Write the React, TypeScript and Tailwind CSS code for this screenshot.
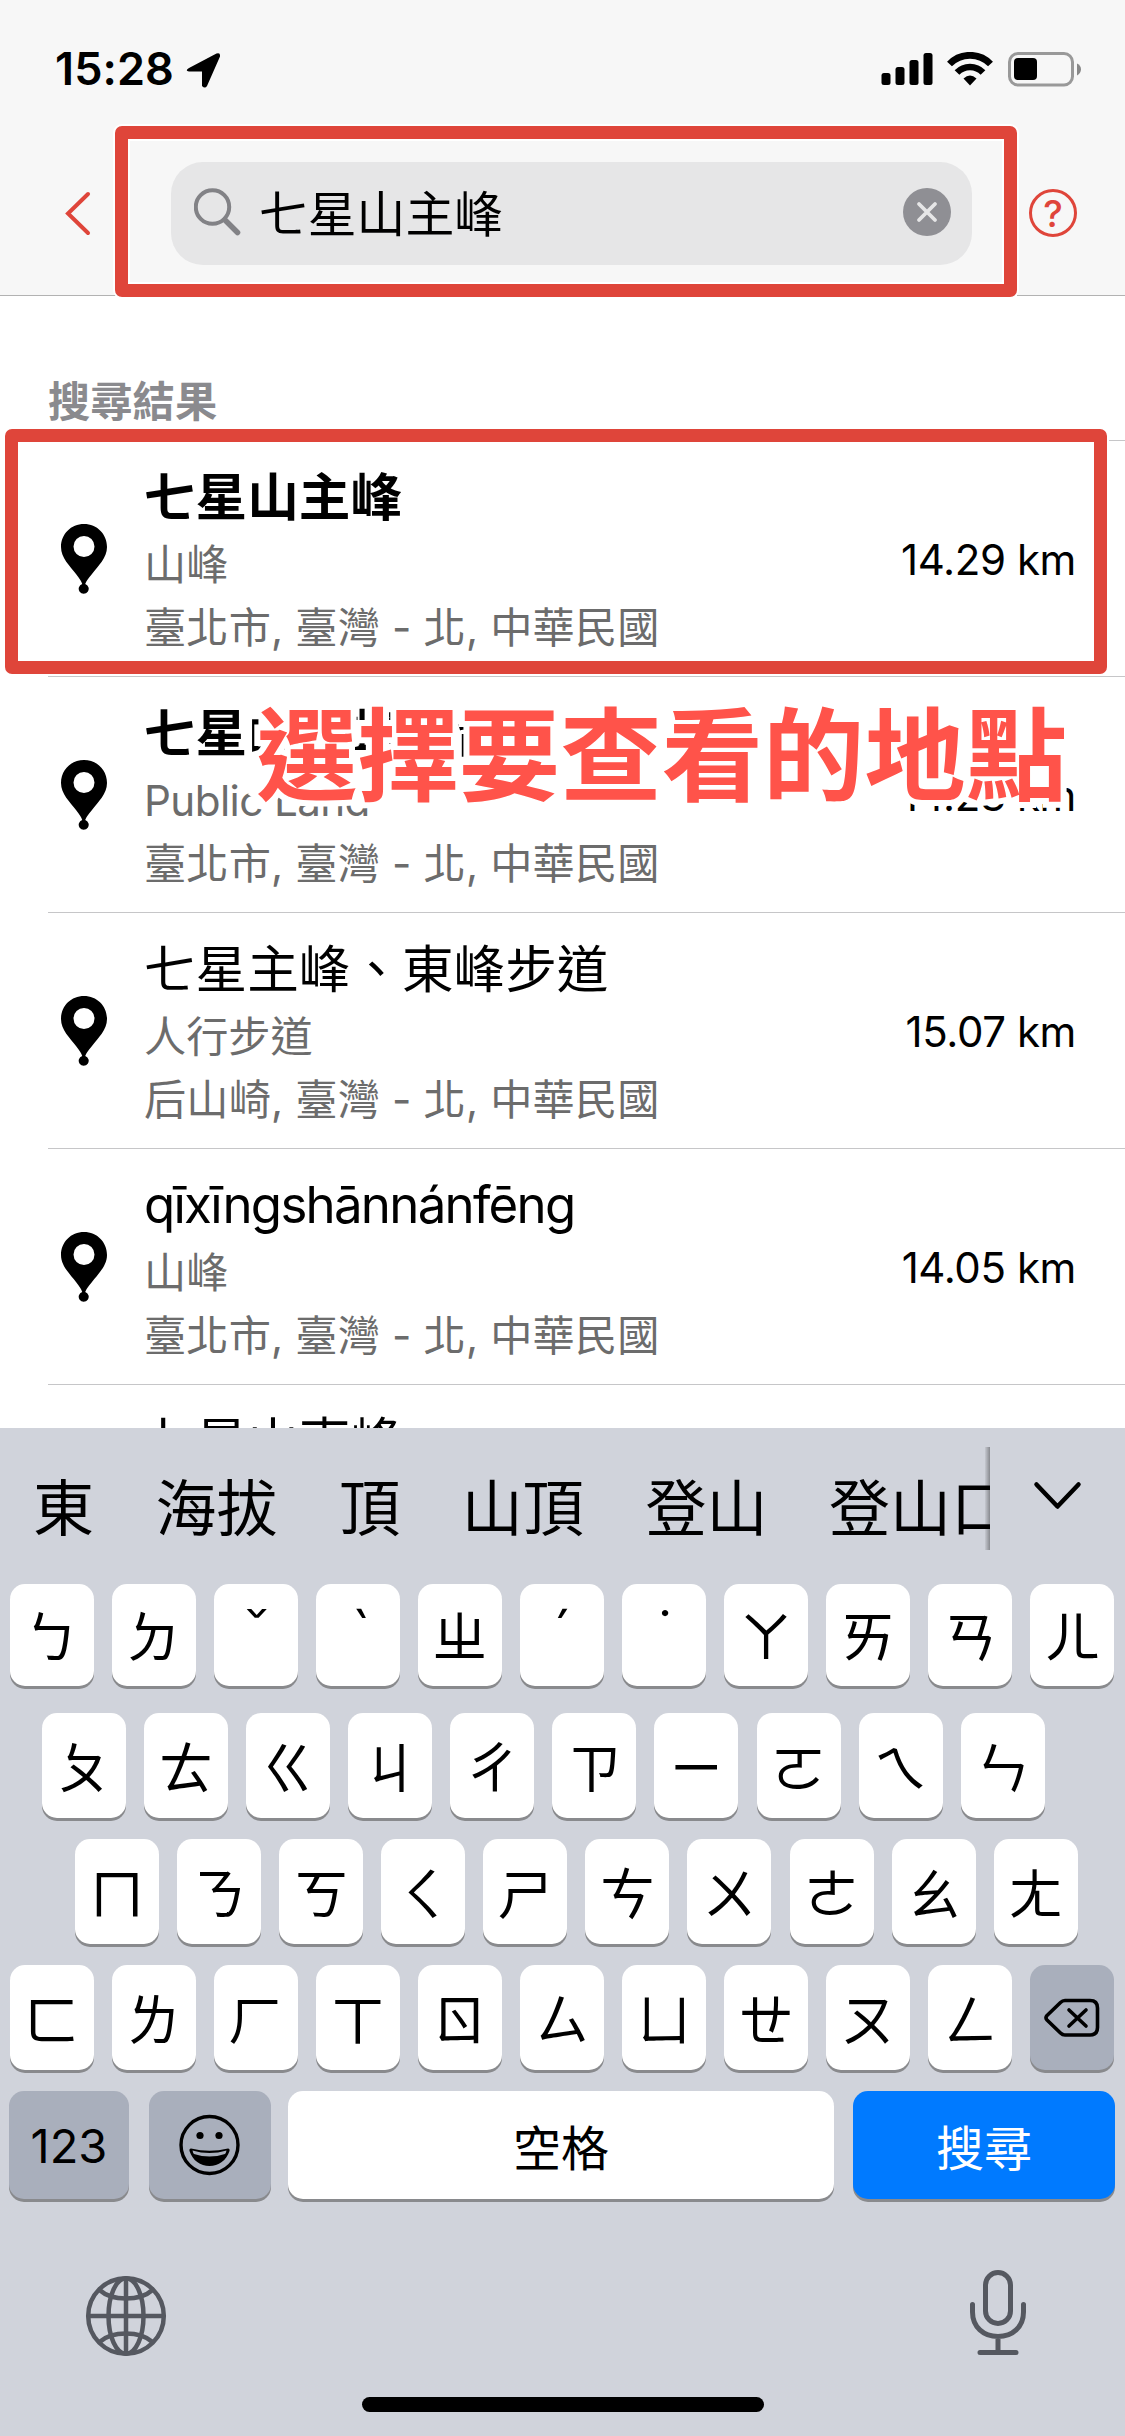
import { type ReactNode } from 'react';
import clsx from 'clsx';

interface Place {
  name: string;
  kind?: string;
  region?: string;
  distance?: string;
  strong?: boolean;
  latin?: boolean;
}

const PLACES: Place[] = [
  { name: '七星山主峰', kind: '山峰', region: '臺北市, 臺灣 - 北, 中華民國', distance: '14.29 km', strong: true },
  { name: '七星山主峰平台', kind: 'Public Land', region: '臺北市, 臺灣 - 北, 中華民國', distance: '14.23 km', strong: true },
  { name: '七星主峰、東峰步道', kind: '人行步道', region: '后山崎, 臺灣 - 北, 中華民國', distance: '15.07 km' },
  { name: 'qīxīngshānnánfēng', kind: '山峰', region: '臺北市, 臺灣 - 北, 中華民國', distance: '14.05 km', latin: true },
  { name: '七星山東峰' },
];

const CANDIDATES = ['東', '海拔', '頂', '山頂', '登山', '登山口'];

const TONES = ['ˇ', 'ˋ', 'ˊ', '˙'];

const KEY_ROWS = [
  ['ㄅ', 'ㄉ', 'ˇ', 'ˋ', 'ㄓ', 'ˊ', '˙', 'ㄚ', 'ㄞ', 'ㄢ', 'ㄦ'],
  ['ㄆ', 'ㄊ', 'ㄍ', 'ㄐ', 'ㄔ', 'ㄗ', 'ㄧ', 'ㄛ', 'ㄟ', 'ㄣ'],
  ['ㄇ', 'ㄋ', 'ㄎ', 'ㄑ', 'ㄕ', 'ㄘ', 'ㄨ', 'ㄜ', 'ㄠ', 'ㄤ'],
  ['ㄈ', 'ㄌ', 'ㄏ', 'ㄒ', 'ㄖ', 'ㄙ', 'ㄩ', 'ㄝ', 'ㄡ', 'ㄥ'],
];

export default function App() {
  return (
    <div className="relative flex h-[2436px] w-[1125px] flex-col overflow-hidden bg-white font-['Inter','Noto_Sans_CJK_TC',sans-serif] text-black">
      <header className="h-[296px] shrink-0 border-b border-[#b2b2b2] bg-[#f7f7f7]">
        <StatusBar />
        <SearchBar />
      </header>

      <main className="h-[1132px] shrink-0 overflow-hidden">
        <h2 className="flex h-[144px] items-end pb-[7px] pl-12 text-[42.3px] leading-[62px] font-bold text-[#8a8a8e]">
          搜尋結果
        </h2>
        <ul className="ml-12 border-t border-[#c6c6c8]">
          {PLACES.map((place) => (
            <PlaceRow key={place.name} place={place} />
          ))}
        </ul>
      </main>

      <Keyboard />

      <Highlight className="top-[126px] left-[115px] h-[171px] w-[902px]" />
      <Highlight className="top-[429px] left-[5px] h-[245px] w-[1102px]" />
      <p className="absolute top-[683px] left-[256px] text-[101.4px] leading-[146px] font-bold whitespace-nowrap text-[#ff534a] [-webkit-text-stroke:12px_white] [paint-order:stroke_fill]">
        選擇要查看的地點
      </p>
    </div>
  );
}

function Highlight({ className }: { className: string }) {
  return (
    <div
      className={clsx(
        'pointer-events-none absolute rounded-[7px] border-[13px] border-[#df453a] shadow-[0_0_0_2px_white,inset_0_0_0_2px_white]',
        className,
      )}
    />
  );
}

function StatusBar() {
  return (
    <div className="flex h-[126px] items-start justify-between pt-[52px] pr-[43px] pl-[55px]">
      <div className="flex items-start gap-[12px]">
        <span className="text-[45px] leading-[34px] font-semibold tracking-[0.1px]">15:28</span>
        <svg width="35" height="36" viewBox="0 0 35 36" aria-hidden>
          <path d="M3 16 30.500 1.500Q34.500 0 34 4.500L21 34Q19 37 16 34V19.500H3Q-1.500 18.500 3 16Z" />
        </svg>
      </div>
      <div className="flex items-start">
        <svg width="52" height="34" viewBox="0 0 52 34" aria-hidden>
          <rect x="0.500" y="21" width="9" height="12" rx="2.500" />
          <rect x="14.500" y="15" width="9" height="18" rx="2.500" />
          <rect x="28.500" y="8" width="9" height="25" rx="2.500" />
          <rect x="42.500" y="1" width="9" height="32" rx="2.500" />
        </svg>
        <svg className="ml-3.5" width="46" height="34" viewBox="0 0 46 34" aria-hidden>
          <path d="M2.500 12A28.500 28.500 0 0 1 43.500 12" fill="none" stroke="#000" strokeWidth="6.800" />
          <path d="M10 20.500A18 18 0 0 1 36 20.500" fill="none" stroke="#000" strokeWidth="6.500" />
          <path d="M16.500 26.500Q23 20.500 29.500 26.500L23 33.500Z" />
        </svg>
        <svg className="ml-[15px]" width="74" height="35" viewBox="0 0 74 35" aria-hidden>
          <rect x="1.500" y="1.500" width="63" height="31.500" rx="8.500" fill="none" stroke="#999" strokeWidth="3" />
          <rect x="6" y="6" width="23" height="22" rx="4" />
          <path d="M69 11.500Q73 13.500 73 17.300T69 23.500Z" fill="#888" />
        </svg>
      </div>
    </div>
  );
}

function SearchBar() {
  return (
    <div className="flex items-center pt-9 pl-[63px]">
      <svg width="28" height="46" viewBox="0 0 28 46" fill="none" stroke="#df453a" strokeWidth="4" aria-hidden>
        <path d="M25 3 5 22.500 25 42" strokeLinecap="round" strokeLinejoin="miter" />
      </svg>
      <div className="ml-20 flex h-[103px] w-[801px] items-center rounded-[32px] bg-[#e6e6e7] pr-[21px] pl-[23px]">
        <svg className="mb-1" width="47" height="48" viewBox="0 0 47 48" fill="none" stroke="#828286" aria-hidden>
          <circle cx="18.500" cy="19" r="16.700" strokeWidth="4" />
          <path d="M31 32 43.500 44.500" strokeWidth="5.500" strokeLinecap="round" />
        </svg>
        <span className="mt-0.5 ml-[18px] flex-1 text-[48.800px] leading-[70px]">七星山主峰</span>
        <svg className="mb-[3px]" width="48" height="48" viewBox="0 0 48 48" aria-hidden>
          <circle cx="24" cy="24" r="24" fill="#8f8f94" />
          <path d="M16 16 32 32M32 16 16 32" stroke="#e6e6e7" strokeWidth="3.800" strokeLinecap="round" />
        </svg>
      </div>
      <div className="mb-px ml-[57px] grid h-12 w-12 place-items-center rounded-full border-[3px] border-[#df453a] text-[37px] leading-none font-medium text-[#df453a]">
        ?
      </div>
    </div>
  );
}

function PlaceRow({ place }: { place: Place }) {
  return (
    <li className="flex h-[236px] items-start border-b border-[#c6c6c8]">
      <svg className="mt-[83px] ml-[13px]" width="46" height="70" viewBox="0 0 46 70" aria-hidden>
        <path
          fillRule="evenodd"
          d="M23 0C10 0 0 10 0 23C0 34 9 42 15 50Q20.500 57 21.200 60A5 5 0 1 0 24.200 60Q25 57 31 50C37 42 46 34 46 23C46 10 36 0 23 0ZM23 12A10.500 10.500 0 1 1 23 33A10.500 10.500 0 0 1 23 12Z"
        />
      </svg>
      <div className="ml-[37px] flex-1 pt-[18.500px] text-[42.200px] text-[#6c6c6c]">
        <p
          className={clsx(
            'leading-[74px] text-black',
            place.strong && 'font-bold',
            place.latin ? 'text-[51px] tracking-[-1.750px]' : 'text-[51.600px]',
          )}
        >
          {place.name}
        </p>
        {place.kind && (
          <p className={clsx('leading-[62px]', place.kind === 'Public Land' && 'tracking-[-0.600px]')}>{place.kind}</p>
        )}
        {place.region && <p className="leading-[64px] tracking-[0.150px] whitespace-nowrap">{place.region}</p>}
      </div>
      {place.distance && (
        <span className="mt-[88px] mr-[49px] text-[42px] leading-[62px] tracking-[-0.400px]">{place.distance}</span>
      )}
    </li>
  );
}

function Keyboard() {
  return (
    <section className="flex flex-1 flex-col bg-[#d0d3db]">
      <div className="flex h-[156px] items-start">
        <div className="relative mt-[19px] flex h-[103px] w-[990px] items-center gap-[61.600px] overflow-hidden pt-5 pl-[33px] text-[61px] leading-[82px] whitespace-nowrap">
          {CANDIDATES.map((word) => (
            <span key={word} className="shrink-0">
              {word}
            </span>
          ))}
          <div className="absolute inset-y-0 right-0 w-[5px] bg-linear-to-r from-black/5 to-black/35" />
        </div>
        <svg
          className="mt-[52px] ml-[42px]"
          width="51"
          height="32"
          viewBox="0 0 51 32"
          fill="none"
          stroke="#000"
          strokeWidth="4.500"
          strokeLinecap="round"
          strokeLinejoin="round"
          aria-hidden
        >
          <path d="M4.500 4.500 25.500 26.500 46.500 4.500" />
        </svg>
      </div>

      <KeyRow className="mb-[27px] h-[102px] pl-[9.500px]" keys={KEY_ROWS[0]} />
      <KeyRow className="mb-[21px] h-[105px] pl-[42px]" keys={KEY_ROWS[1]} />
      <KeyRow className="mb-[21px] h-[105px] pl-[75px]" keys={KEY_ROWS[2]} />
      <KeyRow className="mb-[21px] h-[105px] pl-[9.500px]" keys={KEY_ROWS[3]}>
        <Key className="w-[84px] bg-[#a9afbc]">
          <svg width="56" height="40" viewBox="0 0 56 40" fill="none" stroke="#000" strokeWidth="3.600" aria-hidden>
            <path
              d="M21 2.500H46Q53.500 2.500 53.500 10V29.500Q53.500 37 46 37H21Q18.500 37 16.500 35L3 22Q1 19.800 3 17.500L16.500 4.500Q18.500 2.500 21 2.500Z"
              strokeLinejoin="round"
            />
            <path d="M25 12 42 28M42 12 25 28" strokeLinecap="round" />
          </svg>
        </Key>
      </KeyRow>
      <div className="flex h-[108px] shrink-0 px-[9px] text-[48px]">
        <Key className="w-[120px] bg-[#a9afbc] text-[47px]">123</Key>
        <Key className="ml-5 w-[122px] bg-[#a9afbc]">
          <svg width="62" height="62" viewBox="0 0 62 62" aria-hidden>
            <circle cx="30.500" cy="31" r="28.500" fill="none" stroke="#000" strokeWidth="3.400" />
            <circle cx="21" cy="21.500" r="3.600" />
            <circle cx="40" cy="21.500" r="3.600" />
            <path d="M12 34.500Q30.500 39 49 34.500Q51 34.500 50.500 37C47.500 46.500 39.500 52 30.500 52S13.500 46.500 10.500 37Q10 34.500 12 34.500Z" />
            <path d="M13.500 36.500Q30.500 41.500 47.500 36.500Q47 39 46 40Q30.500 45 15 40Q14 39 13.500 36.500Z" fill="#a9afbc" />
          </svg>
        </Key>
        <Key className="ml-[17px] w-[546px] bg-white pt-2">空格</Key>
        <Key className="ml-[19px] w-[262px] bg-[#007aff] pt-2 text-white">搜尋</Key>
      </div>

      <div className="flex flex-1 items-start justify-between pt-[71px] pr-[98px] pl-[85px] text-[#555860]">
        <svg className="mt-[5px]" width="82" height="82" viewBox="0 0 82 82" fill="none" stroke="currentColor" strokeWidth="4.500" aria-hidden>
          <circle cx="41" cy="41" r="37.800" />
          <path d="M41 3V79M3 41H79" />
          <ellipse cx="41" cy="41" rx="17.500" ry="37.800" />
          <path d="M14.500 15Q24 23.500 41 23.500T67.500 15M14.500 67Q24 58.500 41 58.500T67.500 67" />
        </svg>
        <svg width="58" height="86" viewBox="0 0 58 86" fill="none" stroke="currentColor" strokeWidth="5" strokeLinecap="round" aria-hidden>
          <rect x="16.500" y="2.500" width="25" height="51" rx="12.500" />
          <path d="M3.500 34.500V42C3.500 57 14.500 66.500 29 66.500S54.500 57 54.500 42V34.500M29 67V82M11 82.500H47" />
        </svg>
      </div>
      <div className="mx-auto mb-6 h-[15px] w-[402px] rounded-full bg-black" />
    </section>
  );
}

function KeyRow({ keys, className, children }: { keys: string[]; className: string; children?: ReactNode }) {
  return (
    <div className={clsx('flex shrink-0 gap-[18.080px]', className)}>
      {keys.map((label) => (
        <Key
          key={label}
          className={clsx(
            'w-[84px] bg-white',
            TONES.includes(label) ? 'pl-0.5 text-[66px] font-light' : 'pt-[5px] text-[55px]',
          )}
        >
          {label}
        </Key>
      ))}
      {children}
    </div>
  );
}

function Key({ className, children }: { className: string; children: ReactNode }) {
  return (
    <button
      type="button"
      className={clsx('flex shrink-0 items-center justify-center rounded-[15px] leading-none shadow-[0_3px_0_#898a8d]', className)}
    >
      {children}
    </button>
  );
}
